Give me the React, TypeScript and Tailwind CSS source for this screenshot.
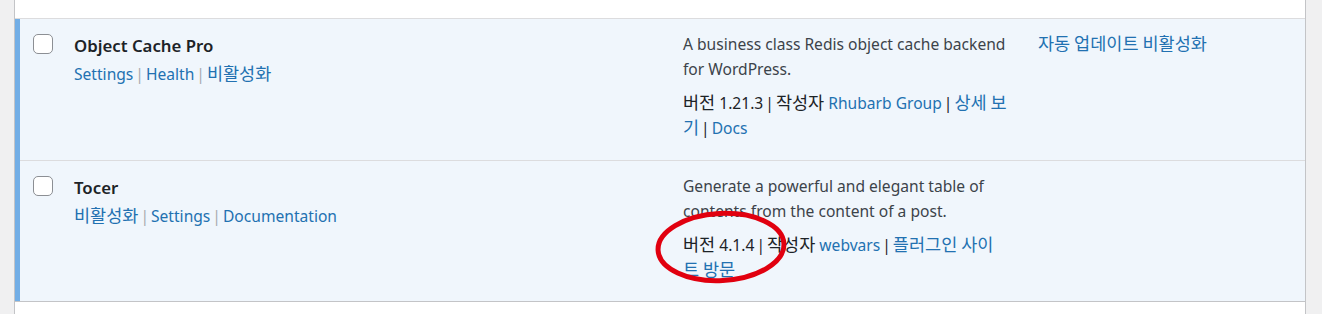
const font = { fontFamily: '"Noto Sans", "Noto Sans CJK KR", sans-serif' }

function Ko({ children }: { children: React.ReactNode }) {
  return <span className="text-[17.5px] leading-[1] [font-family:'Noto_Sans_CJK_KR',sans-serif]">{children}</span>
}

function Sep({ light }: { light?: boolean }) {
  return <span className={`mx-[2px] ${light ? 'text-[#a7aaad]' : 'text-[#1d2327]'}`}>|</span>
}

function Link({ children }: { children: React.ReactNode }) {
  return <a className="text-[#2271b1] cursor-pointer">{children}</a>
}

type RowProps = {
  name: string
  actions: React.ReactNode
  desc: React.ReactNode
  meta: React.ReactNode
  auto?: React.ReactNode
  last?: boolean
}

function PluginRow({ name, actions, desc, meta, auto, last }: RowProps) {
  return (
    <div className="flex">
      <div className="w-[5px] shrink-0 bg-[#72aee6]" />
      <div
        className={`grid flex-1 grid-cols-[42px_608px_355px_1fr] bg-[#f0f6fc] ${
          last ? 'pb-[18px]' : 'pb-[19px] border-b border-[#dcdcde]'
        }`}
      >
        <div className="pl-[13px] pt-[15px]">
          <span className="block h-5 w-5 rounded-[5px] border border-[#8c8f94] bg-white" />
        </div>
        <div className="pl-[12px] pt-[15px]">
          <strong className="block text-[16.8px] font-semibold leading-[24px] text-[#1d2327]">{name}</strong>
          <div className="mt-[4px] text-[15.6px] leading-[25px] text-[#2271b1]">{actions}</div>
        </div>
        <div className="w-[344px] pl-[13px] pt-[13px] text-[15.6px] leading-[25px]">
          <p className="text-[#3c434a]">{desc}</p>
          <p className="mt-[9px] whitespace-nowrap text-[#1d2327]">{meta}</p>
        </div>
        <div className="pl-[13px] pt-[13px] text-[15.6px] leading-[25px]">{auto}</div>
      </div>
    </div>
  )
}

export default function App() {
  return (
    <div className="relative min-h-[314px] bg-[#f0f0f1] pl-[14px] pr-[16px]" style={font}>
      <div className="border-x border-[#c3c4c7] bg-white">
        <div className="h-[19px] border-b border-[#dcdcde]" />
        <PluginRow
          name="Object Cache Pro"
          actions={
            <>
              <Link>Settings</Link>
              <Sep light />
              <Link>Health</Link>
              <Sep light />
              <Link>
                <Ko>비활성화</Ko>
              </Link>
            </>
          }
          desc="A business class Redis object cache backend for WordPress."
          meta={
            <>
              <Ko>버전</Ko> 1.21.3<Sep /><Ko>작성자</Ko> <Link>Rhubarb Group</Link>
              <Sep />
              <Link>
                <Ko>
                  상세 보<br />기
                </Ko>
              </Link>
              <Sep />
              <Link>Docs</Link>
            </>
          }
          auto={
            <Link>
              <Ko>자동 업데이트 비활성화</Ko>
            </Link>
          }
        />
        <PluginRow
          last
          name="Tocer"
          actions={
            <>
              <Link>
                <Ko>비활성화</Ko>
              </Link>
              <Sep light />
              <Link>Settings</Link>
              <Sep light />
              <Link>Documentation</Link>
            </>
          }
          desc="Generate a powerful and elegant table of contents from the content of a post."
          meta={
            <>
              <Ko>버전</Ko> 4.1.4<Sep /><Ko>작성자</Ko> <Link>webvars</Link>
              <Sep />
              <Link>
                <Ko>
                  플러그인 사이
                  <br />트 방문
                </Ko>
              </Link>
            </>
          }
        />
        <div className="h-[13px] border-t border-[#c3c4c7]" />
      </div>
      <svg className="pointer-events-none absolute left-[652px] top-[208px]" width="140" height="80" viewBox="0 0 140 80">
        <ellipse cx="69" cy="39" rx="63" ry="33.5" fill="none" stroke="#e1000f" strokeWidth="5" transform="rotate(-3 69 39)" />
      </svg>
    </div>
  )
}
